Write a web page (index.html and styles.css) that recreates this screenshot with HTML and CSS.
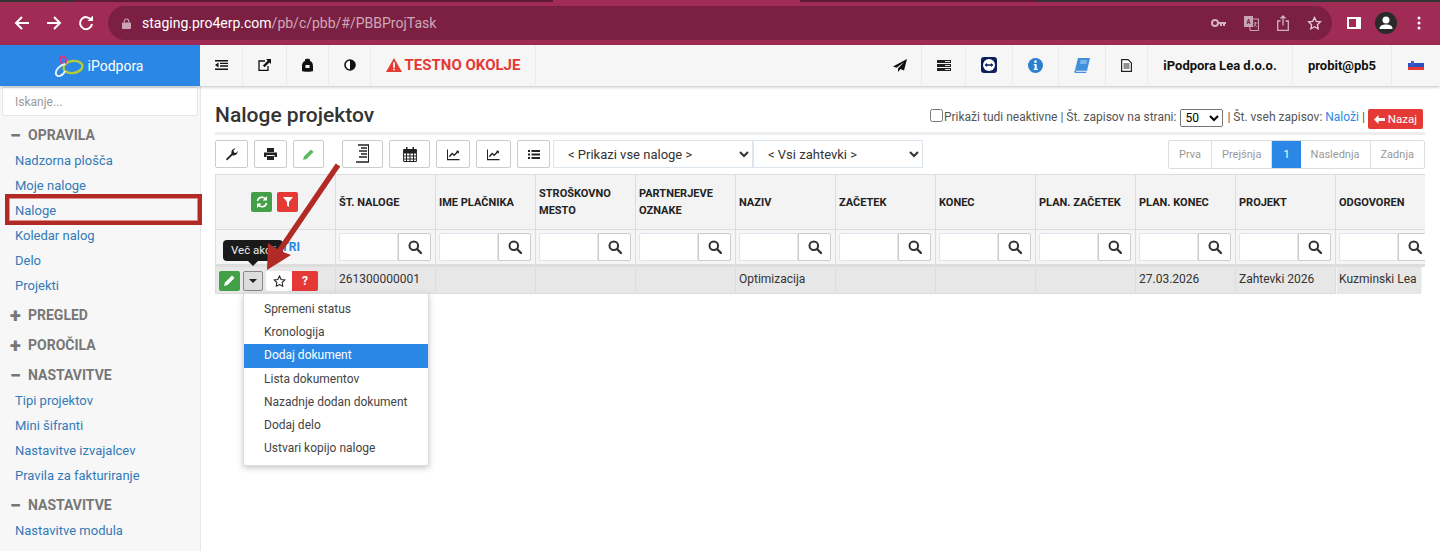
FILE: index.html
```html
<!DOCTYPE html>
<html lang="en">

<head>
    <meta charset="UTF-8">
    <title>Naloge projektov</title>
    <link rel="stylesheet" href="styles.css">
</head>

<body>
    <svg class="defs" width="0" height="0">
        <symbol id="i-search" viewBox="0 0 14 14">
            <circle cx="5.8" cy="5.8" r="4.3" fill="none" stroke="currentColor" stroke-width="2"/>
            <path d="M9 9l4 4" stroke="currentColor" stroke-width="2.4" stroke-linecap="round"/>
        </symbol>
        <symbol id="i-chart" viewBox="0 0 14 14">
            <path d="M.5 1.5v11h13" fill="none" stroke="currentColor" stroke-width="1.2"/>
            <path d="M2.5 9.5l3-3.5 2.2 1.8L12 3.5" fill="none" stroke="currentColor" stroke-width="1.5"/>
            <path d="M9.5 3h3.3v3.3z" fill="currentColor"/>
        </symbol>
    </svg>

    <!-- Browser -->
    <div class="tabstrip">
        <span class="tab-a"></span><span class="tab-b"></span><span class="tab-gap"></span><span class="tab-c"></span><span class="tab-a tab-fill"></span>
    </div>
    <div class="browser-bar">
        <svg class="chrome-icon" viewBox="0 0 16 16"><path d="M15 8H2M8 2L2 8l6 6" fill="none" stroke="#fff" stroke-width="2"/></svg>
        <svg class="chrome-icon" viewBox="0 0 16 16"><path d="M1 8h13M8 2l6 6-6 6" fill="none" stroke="#fff" stroke-width="2"/></svg>
        <svg class="chrome-icon" viewBox="0 0 16 16"><path d="M13.2 5A6 6 0 1 0 14 9" fill="none" stroke="#fff" stroke-width="2"/><path d="M9.500 6H15V.5z" fill="#fff"/></svg>
        <div class="omnibox">
            <svg class="lock" viewBox="0 0 10 12"><path d="M2.500 5V3.500a2.500 2.500 0 0 1 5 0V5" fill="none" stroke="#c9a4b4" stroke-width="1.200"/><rect y="5" width="10" height="7" rx="1" fill="#c9a4b4"/></svg>
            <span class="url"><b>staging.pro4erp.com</b>/pb/c/pbb/#/PBBProjTask</span>
            <span class="omni-icons">
                <svg width="15" height="8" viewBox="0 0 15 8"><circle cx="4" cy="4" r="3" fill="none" stroke="#d3b3c0" stroke-width="2"/><path d="M7 3h8v2h-1v2h-2V5h-1v2H9V5H7z" fill="#d3b3c0"/></svg>
                <svg width="15" height="15" viewBox="0 0 15 15"><path d="M5 3h9.500v11.500H6V11" fill="none" stroke="#c9a4b4"/><rect width="9" height="11" fill="#c9a4b4"/><path d="M3 8l1.500-5L6 8M3.500 6.500h2" fill="none" stroke="#7b2043"/><path d="M9.500 7h4M11.500 6v1c0 2-1 3-2 4M10.500 8c.5 1.500 1.500 2.500 3 3" fill="none" stroke="#c9a4b4" stroke-width=".8"/></svg>
                <svg width="12" height="16" viewBox="0 0 12 16"><path d="M3.500 6H.7v9.300h10.600V6H8.500M6 10.500V1M3.500 3.500L6 1l2.500 2.500" fill="none" stroke="#d3b3c0" stroke-width="1.300"/></svg>
                <svg width="15" height="14" viewBox="0 0 15 14"><path d="M7.500 1.500l1.800 3.800 4.100.5-3 2.900.8 4.100-3.700-2-3.700 2 .8-4.100-3-2.900 4.100-.5z" fill="none" stroke="#e3cdd6" stroke-width="1.300"/></svg>
            </span>
        </div>
        <svg class="panel-icon" viewBox="0 0 14 12"><path d="M0 0h14v12H0z" fill="#fff"/><path d="M2 2h7v8H2z" fill="#a02b55"/></svg>
        <svg class="avatar" viewBox="0 0 22 22"><circle cx="11" cy="11" r="11" fill="#2a2a2a"/><circle cx="11" cy="8" r="3.500" fill="#fff"/><path d="M4.500 17c0-3.500 3-4.500 6.500-4.500s6.500 1 6.500 4.500z" fill="#fff"/></svg>
        <svg class="dots" viewBox="0 0 4 14"><circle cx="2" cy="2" r="1.500" fill="#fff"/><circle cx="2" cy="7" r="1.500" fill="#fff"/><circle cx="2" cy="12" r="1.500" fill="#fff"/></svg>
    </div>

    <!-- App header -->
    <div class="app-header">
        <div class="brand">
            <svg class="brand-logo" width="30" height="22" viewBox="0 0 30 22">
                <ellipse cx="19" cy="12" rx="9.500" ry="6" fill="none" stroke="#b3cc35" stroke-width="2.400" transform="rotate(-8 19 12)"/>
                <path d="M9 10C6 6 5 2 8 1.500s5 3 3.500 7" fill="none" stroke="#e0337f" stroke-width="2"/>
                <path d="M11 9C6 10 1 15 2 19s7 2 9-3" fill="none" stroke="#e8f3ff" stroke-width="2"/>
            </svg>
            <span>iPodpora</span>
        </div>
        <div class="topnav">
            <a class="nav-item w43"><svg width="13" height="10" viewBox="0 0 13 10"><path d="M0 0h13v1.500H0zM5 2.700h8v1.400H5zM5 5.300h8v1.400H5zM0 8.500h13V10H0zM3.500 2.500v5L0 5z" fill="#111"/></svg></a>
            <a class="nav-item w44"><svg width="13" height="12" viewBox="0 0 13 12"><path d="M7 2H1v9.500h9V7" fill="none" stroke="#111" stroke-width="1.300"/><path d="M8 0h5v5l-1.600-1.600L6.500 8.200 4.900 6.600 9.700 1.700z" fill="#111"/></svg></a>
            <a class="nav-item w42"><svg width="11" height="14" viewBox="0 0 11 14"><path d="M3 3V1.500C3 .5 8 .5 8 1.500V3c3 1 3 4 3 6v4c0 1-11 1-11 0V9c0-2 0-5 3-6z" fill="#111"/><rect x="3.500" y="7" width="4" height="3" fill="#f6f6f6"/></svg></a>
            <a class="nav-item w42"><svg width="12" height="12" viewBox="0 0 12 12"><circle cx="6" cy="6" r="5" fill="#fff" stroke="#111" stroke-width="1.600"/><path d="M6 1a5 5 0 0 1 0 10z" fill="#111"/></svg></a>
            <a class="nav-item nav-warning w165">
                <svg width="16" height="14" viewBox="0 0 15 13"><path d="M7.500 0L15 13H0z" fill="#e53935"/><path d="M6.700 4h1.600v5H6.700zM6.700 10h1.600v1.500H6.700z" fill="#fff"/></svg>
                TESTNO OKOLJE
            </a>
            <span class="nav-spacer"></span>
            <a class="nav-item w44"><svg width="14" height="13" viewBox="0 0 14 13"><path d="M14 0L0 7.500l3.500 1.300L11 3 5 9.500V13l2.500-3L11 11.500z" fill="#111"/></svg></a>
            <a class="nav-item w44"><svg width="14" height="11" viewBox="0 0 14 11"><path d="M0 0h14v3H0zM0 4h14v3H0zM0 8h14v3H0z" fill="#222"/><path d="M8 1h5v1H8zM8 5h5v1H8zM8 9h5v1H8z" fill="#ddd"/></svg></a>
            <a class="nav-item w47"><svg width="16" height="16" viewBox="0 0 16 16"><rect width="16" height="16" rx="3" fill="#0b1f5c"/><circle cx="8" cy="8" r="6" fill="#fff"/><path d="M3.500 8L6 6v1.300h4V6l2.500 2L10 10V8.700H6V10z" fill="#0b1f5c"/></svg></a>
            <a class="nav-item w46"><svg width="15" height="15" viewBox="0 0 15 15"><circle cx="7.500" cy="7.500" r="7.500" fill="#2b7fd0"/><path d="M6.300 2.500h2.400v2.200H6.300zM5.700 6h3v4.700h1V12H5.700v-1.300h1V7.300h-1z" fill="#fff"/></svg></a>
            <a class="nav-item w47"><svg width="16" height="15" viewBox="0 0 16 15"><path d="M4 0h12l-2.800 12H1z" fill="#3f8fdc"/><path d="M6.500 3h6.500M6 5h6.500" stroke="#bfdcf7"/><path d="M1 12.200C0 13 0 15 1.500 15H12l.6-1.200H2.500c-.8 0-.8-.9 0-.9h10.700l.2-.7z" fill="#3f8fdc"/></svg></a>
            <a class="nav-item w42"><svg width="11" height="13" viewBox="0 0 11 13"><path d="M.6.600h6.500l3.300 3.300v8.500H.6z" fill="#fff" stroke="#222" stroke-width="1.200"/><path d="M2.500 5h6M2.500 7h6M2.500 9h6" stroke="#222"/></svg></a>
            <a class="nav-item nav-text w145">iPodpora Lea d.o.o.</a>
            <a class="nav-item nav-text w99">probit@pb5</a>
            <a class="nav-item w48"><span class="flag"></span></a>
        </div>
    </div>

    <div class="layout">
        <!-- Sidebar -->
        <div class="sidebar">
            <input class="side-search" type="text" placeholder="Iskanje...">
            <div class="side-head"><span class="side-sign">&#8722;</span>OPRAVILA</div>
            <a class="side-link">Nadzorna plošča</a>
            <a class="side-link">Moje naloge</a>
            <a class="side-link">Naloge</a>
            <a class="side-link">Koledar nalog</a>
            <a class="side-link">Delo</a>
            <a class="side-link">Projekti</a>
            <div class="side-head"><span class="side-sign">+</span>PREGLED</div>
            <div class="side-head"><span class="side-sign">+</span>POROČILA</div>
            <div class="side-head"><span class="side-sign">&#8722;</span>NASTAVITVE</div>
            <a class="side-link">Tipi projektov</a>
            <a class="side-link">Mini šifranti</a>
            <a class="side-link">Nastavitve izvajalcev</a>
            <a class="side-link">Pravila za fakturiranje</a>
            <div class="side-head"><span class="side-sign">&#8722;</span>NASTAVITVE</div>
            <a class="side-link">Nastavitve modula</a>
        </div>

        <!-- Main -->
        <div class="main">
            <div class="title-row">
                <h1>Naloge projektov</h1>
                <div class="title-tools">
                    <input type="checkbox">
                    <span>Prikaži tudi neaktivne | Št. zapisov na strani:</span>
                    <select class="page-size"><option>50</option></select>
                    <span>| Št. vseh zapisov: <a class="load">Naloži</a> |</span>
                    <a class="btn-back">
                        <svg width="11" height="9" viewBox="0 0 11 9"><path d="M4.500 0v3H11v3H4.500v3L0 4.500z" fill="#fff"/></svg>
                        Nazaj
                    </a>
                </div>
            </div>

            <div class="toolbar">
                <button class="tool w33"><svg width="13" height="13" viewBox="0 0 13 13"><path d="M1 11l5.500-5.500C6 3 7.500.5 10.500 0.500L8.500 2.500l.5 2 2 .5 1.500-2c.5 3-2.500 5-5 4.200L2 12.500z" fill="#222"/></svg></button>
                <button class="tool w33"><svg width="13" height="12" viewBox="0 0 13 12"><path d="M3 0h7v4H3zM0 4.500h13V9h-2.500V7h-8v2H0zM3 8h7v4H3z" fill="#222"/></svg></button>
                <button class="tool w31"><svg width="11" height="11" viewBox="0 0 11 11"><path d="M0 11l1-3.500L8 .5l2.500 2.500-7 7z" fill="#5cb85c"/></svg></button>
                <button class="tool w41 tool-far"><svg width="13" height="20" viewBox="0 0 13 20"><path d="M2 1h11M5 4h6M3 7h8M5 10h6M3 13h8M0 18h13" stroke="#222" stroke-width="1.300"/><path d="M12.500 1v17" stroke="#222"/></svg></button>
                <button class="tool w41"><svg width="14" height="15" viewBox="0 0 14 15"><path d="M.6 2.500h12.800v12H.6zM.6 6h12.800M.6 9h12.800M.6 12h12.800M3.500 6v8.500M7 6v8.500M10.500 6v8.500" fill="none" stroke="#222"/><path d="M.6 2.500h12.800V6H.6zM3 0h1.500v3H3zM9.500 0H11v3H9.500z" fill="#222"/></svg></button>
                <button class="tool w34"><svg class="chart" width="13" height="13"><use href="#i-chart"/></svg></button>
                <button class="tool w35"><svg class="chart" width="13" height="13"><use href="#i-chart"/></svg></button>
                <button class="tool w33"><svg width="12" height="9" viewBox="0 0 12 9"><path d="M0 0h2v2H0zM3.500 0H12v2H3.500zM0 3.500h2v2H0zM3.500 3.500H12v2H3.500zM0 7h2v2H0zM3.500 7H12v2H3.500z" fill="#222"/></svg></button>
                <select class="tool-select w200"><option>&lt; Prikazi vse naloge &gt;</option></select>
                <select class="tool-select w170"><option>&lt; Vsi zahtevki &gt;</option></select>
                <div class="pager">
                    <a>Prva</a><a>Prejšnja</a><a class="active">1</a><a>Naslednja</a><a>Zadnja</a>
                </div>
            </div>

            <div class="table-wrap">
                <table class="grid">
                    <tr class="head-row">
                        <th class="first-col">
                            <span class="head-actions">
                                <span class="square green"><svg width="12" height="12" viewBox="0 0 12 12"><path d="M1.500 5A4.500 4.500 0 0 1 9.500 3M10.500 7A4.500 4.500 0 0 1 2.500 9" fill="none" stroke="#fff" stroke-width="1.600"/><path d="M11 0v4.500H6.500zM1 12V7.500h4.500z" fill="#fff"/></svg></span>
                                <span class="square red"><svg width="10" height="10" viewBox="0 0 10 10"><path d="M0 0h10L6 5v5L4 8.500V5z" fill="#fff"/></svg></span>
                            </span>
                        </th>
                        <th>ŠT. NALOGE</th>
                        <th>IME PLAČNIKA</th>
                        <th>STROŠKOVNO<br>MESTO</th>
                        <th>PARTNERJEVE<br>OZNAKE</th>
                        <th>NAZIV</th>
                        <th>ZAČETEK</th>
                        <th>KONEC</th>
                        <th>PLAN. ZAČETEK</th>
                        <th>PLAN. KONEC</th>
                        <th>PROJEKT</th>
                        <th>ODGOVOREN</th>
                    </tr>
                    <tr class="filter-row">
                        <td class="first-col clear-cell">FILTRI</td>
                        <td><div class="filter"><input type="text"><button><svg width="14" height="14"><use href="#i-search"/></svg></button></div></td>
                        <td><div class="filter"><input type="text"><button><svg width="14" height="14"><use href="#i-search"/></svg></button></div></td>
                        <td><div class="filter"><input type="text"><button><svg width="14" height="14"><use href="#i-search"/></svg></button></div></td>
                        <td><div class="filter"><input type="text"><button><svg width="14" height="14"><use href="#i-search"/></svg></button></div></td>
                        <td><div class="filter"><input type="text"><button><svg width="14" height="14"><use href="#i-search"/></svg></button></div></td>
                        <td><div class="filter"><input type="text"><button><svg width="14" height="14"><use href="#i-search"/></svg></button></div></td>
                        <td><div class="filter"><input type="text"><button><svg width="14" height="14"><use href="#i-search"/></svg></button></div></td>
                        <td><div class="filter"><input type="text"><button><svg width="14" height="14"><use href="#i-search"/></svg></button></div></td>
                        <td><div class="filter"><input type="text"><button><svg width="14" height="14"><use href="#i-search"/></svg></button></div></td>
                        <td><div class="filter"><input type="text"><button><svg width="14" height="14"><use href="#i-search"/></svg></button></div></td>
                        <td><div class="filter"><input type="text"><button><svg width="14" height="14"><use href="#i-search"/></svg></button></div></td>
                    </tr>
                    <tr class="data-row">
                        <td class="first-col">
                            <div class="row-actions">
                                <span class="square green"><svg width="11" height="11" viewBox="0 0 11 11"><path d="M0 11l1-3.500L8 .5l2.500 2.500-7 7z" fill="#fff"/></svg></span>
                                <span class="caret-btn"><i></i></span>
                                <span class="star-btn"><svg width="13" height="12" viewBox="0 0 15 14"><path d="M7.500 1.200l1.900 4 4.300.6-3.100 3 .7 4.300-3.800-2-3.800 2 .7-4.300-3.100-3 4.300-.6z" fill="none" stroke="#222" stroke-width="1.200"/></svg></span>
                                <span class="help-btn">?</span>
                            </div>
                        </td>
                        <td>261300000001</td>
                        <td></td>
                        <td></td>
                        <td></td>
                        <td>Optimizacija</td>
                        <td></td>
                        <td></td>
                        <td></td>
                        <td>27.03.2026</td>
                        <td>Zahtevki 2026</td>
                        <td class="last-cell">Kuzminski Lea</td>
                    </tr>
                </table>
            </div>
        </div>
    </div>

    <!-- Overlays -->
    <div class="tooltip">Več akcij</div>
    <ul class="menu">
        <li>Spremeni status</li>
        <li>Kronologija</li>
        <li class="selected">Dodaj dokument</li>
        <li>Lista dokumentov</li>
        <li>Nazadnje dodan dokument</li>
        <li>Dodaj delo</li>
        <li>Ustvari kopijo naloge</li>
    </ul>
    <div class="mark-box"></div>
    <svg class="mark-arrow" width="110" height="120" viewBox="0 0 110 120">
        <path d="M98 5L38 93" stroke="#b22a25" stroke-width="5.500"/>
        <path d="M27 110L28 83 38 90 51 95z" fill="#b22a25"/>
    </svg>
</body>

</html>
```

FILE: styles.css
```css
* {
    box-sizing: border-box;
}

html,
body {
    height: 100%;
}

body {
    margin: 0;
    overflow: hidden;
    background-color: #fff;
    color: #333;
    font-family: 'Roboto', sans-serif;
    font-size: 12px;
}

.defs {
    position: absolute;
}

/* Browser */
.tabstrip {
    display: flex;
    height: 6px;
    background-color: #a02b55;
}

.tabstrip span {
    height: 2px;
}

.tab-a {
    width: 74px;
    background-color: #333;
}

.tab-fill {
    flex: 1;
}

.tab-b {
    width: 479px;
    background-color: #5f1b36;
}

.tab-gap {
    width: 247px;
}

.tab-c {
    width: 238px;
    background-color: #5f1b36;
}

.browser-bar {
    display: flex;
    align-items: center;
    height: 39px;
    padding: 0 0 5px 14px;
    background-color: #a02b55;
}

.chrome-icon {
    width: 16px;
    height: 16px;
    margin-right: 16px;
}

.omnibox {
    display: flex;
    align-items: center;
    width: 1224px;
    height: 34px;
    margin-left: -2px;
    padding: 0 10px 0 14px;
    background-color: #7b2043;
    border-radius: 17px;
    color: #cfa8b8;
    font-size: 14px;
}

.lock {
    width: 9px;
    height: 11px;
    margin-right: 11px;
}

.url b {
    color: #fff;
    font-weight: 400;
}

.omni-icons {
    display: flex;
    align-items: center;
    gap: 18px;
    margin-left: auto;
}

.panel-icon {
    width: 14px;
    height: 12px;
    margin-left: 15px;
}

.avatar {
    width: 22px;
    height: 22px;
    margin-left: 14px;
}

.dots {
    width: 4px;
    height: 14px;
    margin-left: 20px;
}

/* App header */
.app-header {
    display: flex;
    height: 41px;
    box-shadow: 0 1px 3px rgba(0, 0, 0, .25);
    position: relative;
}

.brand {
    display: flex;
    align-items: center;
    justify-content: center;
    gap: 4px;
    width: 200px;
    padding-right: 3px;
    background-color: #2b87e5;
    color: #fff;
    font-size: 14px;
}

.topnav {
    display: flex;
    flex: 1;
    background-color: #f6f6f6;
}

.nav-item {
    display: flex;
    align-items: center;
    justify-content: center;
    gap: 3px;
    height: 40px;
    border-right: 1px solid #ebebeb;
    color: #111;
}

.nav-spacer {
    flex: 1;
}

.nav-warning {
    padding-bottom: 1px;
    color: #e53935;
    font-size: 15px;
    font-weight: 700;
}

.nav-text {
    font-size: 13px;
    font-weight: 700;
}

.flag {
    position: relative;
    width: 16px;
    height: 10px;
    background: linear-gradient(#f4f4f4 33%, #2d4fbf 33%, #2d4fbf 66%, #e53935 66%);
}

.flag::before {
    content: '';
    position: absolute;
    left: 3px;
    top: 1px;
    width: 3px;
    height: 4px;
    background-color: #3b5fc4;
}

.w43 { width: 43px; }
.w44 { width: 44px; }
.w42 { width: 42px; }
.w46 { width: 46px; }
.w47 { width: 47px; }
.w48 { width: 48px; border-right: 0; }
.w99 { width: 99px; }
.w145 { width: 145px; }
.w165 { width: 165px; }

.layout {
    display: flex;
    height: 465px;
}

/* Sidebar */
.sidebar {
    flex: none;
    width: 201px;
    padding: 1px 0 0 2px;
    background-color: #f7f7f7;
    border-right: 1px solid #e6e6e6;
    overflow: hidden;
}

.side-search {
    display: block;
    width: 196px;
    height: 29px;
    margin-bottom: 4px;
    padding: 0 12px;
    background-color: #fff;
    border: 1px solid #dfe6ec;
    border-radius: 2px;
    font: 12px 'Roboto', sans-serif;
}

.side-search::placeholder {
    color: #999;
}

.side-head {
    display: flex;
    align-items: center;
    height: 30px;
    padding-left: 8px;
    color: #777;
    font-size: 14px;
    font-weight: 700;
}

.side-sign {
    width: 18px;
    font-size: 20px;
    font-weight: 900;
    line-height: 1;
}

.side-link {
    display: flex;
    align-items: center;
    height: 25px;
    padding-left: 13px;
    color: #337ab7;
    font-size: 13px;
}

.side-head + .side-link {
    margin-top: -2px;
}

.side-link + .side-head {
    margin-top: 2px;
}

/* Main */
.main {
    flex: none;
    width: 1210px;
    margin-left: 14px;
}

.title-row {
    display: flex;
    align-items: center;
    justify-content: space-between;
    height: 49px;
    padding-top: 12px;
    border-bottom: 3px solid #eee;
}

h1 {
    margin: 0;
    color: #333;
    font-size: 21px;
    font-weight: 500;
}

.title-tools {
    display: flex;
    align-items: center;
    gap: 3px;
    margin-top: 4px;
    padding-right: 2px;
    color: #555;
    font-size: 12px;
}

.title-tools input {
    width: 13px;
    height: 13px;
    margin: -3px -2px 0 0;
}

.page-size {
    width: 43px;
    height: 18px;
    margin: 1px 1px 0;
    font: 12px 'Roboto', sans-serif;
}

.load {
    color: #2b87e5;
}

.btn-back {
    display: flex;
    align-items: center;
    gap: 3px;
    height: 20px;
    margin-top: 4px;
    padding: 0 6px;
    background-color: #e53935;
    border-radius: 2px;
    color: #fff;
    font-size: 11.500px;
}

.toolbar {
    display: flex;
    align-items: flex-start;
    gap: 6px;
    height: 39px;
    padding-top: 5px;
}

.tool {
    display: flex;
    align-items: center;
    justify-content: center;
    height: 28px;
    padding: 0;
    background-color: #fff;
    border: 1px solid #ccc;
    border-radius: 2px;
}

.tool-far {
    margin-left: 12px;
}

.w31 { width: 31px; }
.w33 { width: 33px; }
.w34 { width: 34px; }
.w35 { width: 35px; }
.w41 { width: 41px; }

.chart {
    color: #222;
}

.tool-select {
    height: 28px;
    padding: 0 10px;
    background-color: #fff;
    border: 1px solid #dde6ee;
    color: #333;
    font: 13px 'Roboto', sans-serif;
}

.w200 {
    width: 200px;
    margin-left: -3px;
}

.w170 {
    width: 170px;
    margin-left: -6px;
}

.pager {
    display: flex;
    height: 29px;
    margin-left: auto;
    border: 1px solid #ddd;
    border-radius: 2px;
    color: #999;
    font-size: 11px;
}

.pager a {
    display: flex;
    align-items: center;
    padding: 0 10px;
    border-right: 1px solid #ddd;
}

.pager a:last-child {
    border-right: 0;
}

.pager .active {
    padding: 0 11px;
    background-color: #2b87e5;
    border-right: 0;
    color: #fff;
}

/* Table */
.table-wrap {
    overflow: hidden;
}

.grid {
    width: 1220px;
    border-collapse: collapse;
    table-layout: fixed;
    font-size: 12px;
}

.grid th,
.grid td {
    width: 100px;
    padding: 0 3px;
    border: 1px solid #ddd;
    text-align: left;
}

.grid .first-col {
    width: 120px;
}

.head-row th {
    height: 55px;
    background-color: #f3f3f3;
    color: #222;
    font-size: 11px;
    font-weight: 700;
    line-height: 17px;
}

.head-actions {
    display: flex;
    justify-content: center;
    gap: 5px;
    padding-right: 2px;
}

.square {
    display: flex;
    align-items: center;
    justify-content: center;
    width: 21px;
    height: 20px;
    border-radius: 2px;
}

.green {
    background-color: #43a047;
}

.red {
    background-color: #e53935;
}

.filter-row td {
    height: 36px;
    background-color: #f5f5f5;
    border-bottom: 3px solid #ddd;
}

.clear-cell {
    padding-right: 35px !important;
    color: #2b87e5;
    font-weight: 700;
    text-align: right !important;
}

.filter {
    display: flex;
    width: 92px;
    height: 28px;
}

.filter input {
    width: 59px;
    height: 28px;
    background-color: #fff;
    border: 1px solid #dde6ee;
    border-radius: 2px 0 0 2px;
}

.filter button {
    display: flex;
    flex: none;
    align-items: center;
    justify-content: center;
    width: 33px;
    height: 28px;
    padding: 0;
    background-color: #fff;
    border: 1px solid #ccc;
    border-radius: 0 2px 2px 0;
    color: #333;
}

.data-row td {
    height: 28px;
    padding-bottom: 2px;
    background-color: #e7e7e7;
    color: #333;
}

.data-row .first-col {
    padding-bottom: 0;
}

.grid .last-cell {
    background: linear-gradient(to right, #e7e7e7 85px, #fff 85px);
    border-right: 0;
    border-bottom-color: transparent;
    white-space: nowrap;
}

.row-actions {
    display: flex;
    align-items: center;
    margin-top: 1px;
}

.caret-btn {
    display: flex;
    align-items: center;
    justify-content: center;
    width: 20px;
    height: 20px;
    margin-left: 3px;
    background-color: #ddd;
    border: 1px solid #888;
    border-radius: 2px;
}

.caret-btn i {
    border-top: 4px solid #222;
    border-left: 4px solid transparent;
    border-right: 4px solid transparent;
}

.star-btn {
    display: flex;
    align-items: center;
    justify-content: center;
    width: 26px;
    height: 20px;
    margin-left: 3px;
    background-color: #fff;
    border-radius: 2px 0 0 2px;
}

.help-btn {
    width: 26px;
    height: 20px;
    background-color: #e53935;
    border-radius: 0 2px 2px 0;
    color: #fff;
    font-weight: 700;
    line-height: 20px;
    text-align: center;
}

/* Overlays */
.tooltip {
    position: absolute;
    left: 223px;
    top: 240px;
    width: 60px;
    height: 21px;
    padding-left: 8px;
    background-color: #1a1a1a;
    border-radius: 4px;
    color: #eee;
    font-size: 11.500px;
    line-height: 21px;
    white-space: nowrap;
}

.tooltip::after {
    content: '';
    position: absolute;
    left: 25px;
    top: 21px;
    border-top: 5px solid #1a1a1a;
    border-left: 5px solid transparent;
    border-right: 5px solid transparent;
}

.menu {
    position: absolute;
    left: 243px;
    top: 293px;
    width: 186px;
    margin: 0;
    padding: 4px 0 5px;
    background-color: #fff;
    border: 1px solid #ddd;
    border-radius: 2px;
    box-shadow: 0 2px 6px rgba(0, 0, 0, .22);
    color: #444;
    font-size: 12px;
    list-style: none;
}

.menu li {
    height: 23.200px;
    padding-left: 20px;
    line-height: 23px;
}

.menu .selected {
    background-color: #2b87e5;
    color: #fff;
}

.mark-box {
    position: absolute;
    left: 5px;
    top: 194px;
    width: 197px;
    height: 31px;
    border: 4px solid #b22a25;
    box-shadow: inset 0 0 0 1px #dd8f8b;
}

.mark-arrow {
    position: absolute;
    left: 240px;
    top: 160px;
}
```
